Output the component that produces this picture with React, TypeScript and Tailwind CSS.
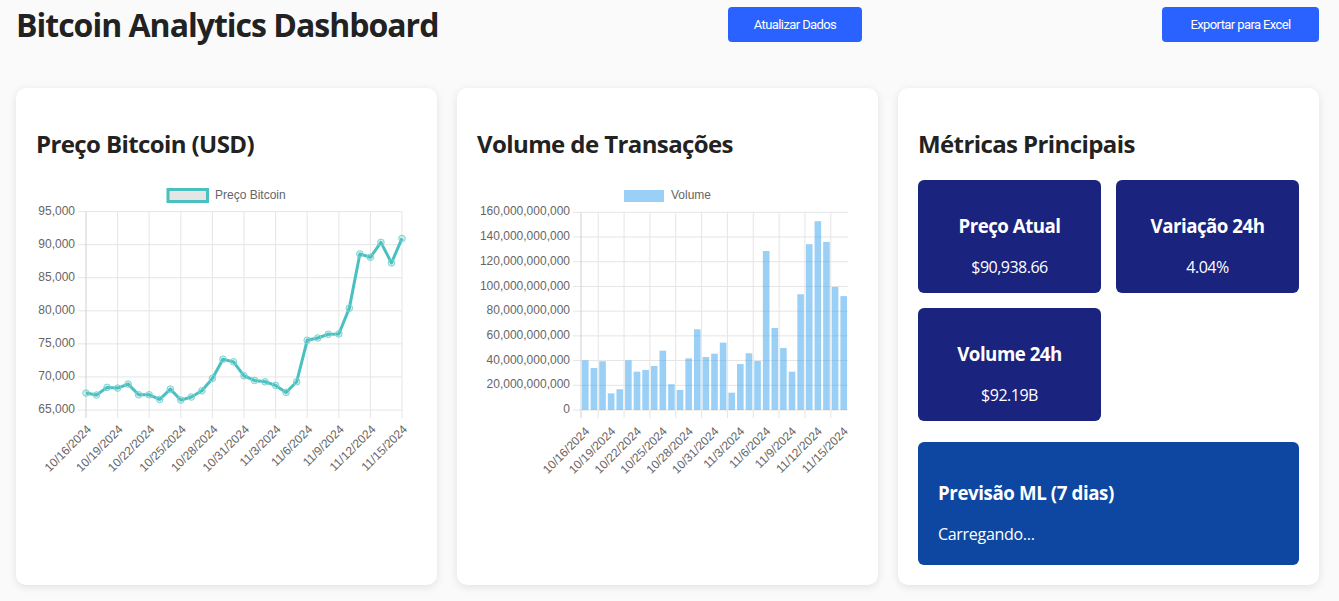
import React from "react"

const prices = [
  67560, 67260, 68420, 68310, 68920, 67300, 67300, 66600, 68160, 66500, 66960, 67900, 69770, 72680, 72280, 70170,
  69470, 69270, 68720, 67660, 69270, 75540, 75890, 76450, 76500, 80400, 88600, 88090, 90350, 87240, 90938.66,
]

const volumes = [
  40.2, 34, 39.4, 13.5, 16.8, 40.2, 31, 32.4, 35.6, 48, 20.8, 16.2, 41.8, 65.3, 42.9, 45.6, 54.5, 14, 37.2, 45.9,
  39.7, 128.7, 66.4, 50.2, 31, 93.7, 134.2, 152.8, 136, 99.6, 92.19,
]

const labels = [
  "10/16/2024", "10/19/2024", "10/22/2024", "10/25/2024", "10/28/2024", "10/31/2024",
  "11/3/2024", "11/6/2024", "11/9/2024", "11/12/2024", "11/15/2024",
]

const font = { fontFamily: "'Liberation Sans', Arial, sans-serif" }

function PriceChart() {
  const x0 = 50
  const x1 = 366
  const top = 31.6
  const bottom = 230
  const step = (x1 - x0) / 30
  const yOf = (v: number) => bottom - ((v - 65000) / 30000) * (bottom - top)
  const pts = prices.map((v, i) => [x0 + i * step, yOf(v)])
  return (
    <svg width="381" height="320" style={font}>
      <rect x="132" y="9.5" width="39.5" height="12" fill="rgba(0,0,0,0.1)" stroke="#4bc0c0" strokeWidth="3" />
      <text x="179" y="15.5" fontSize="12" fill="#666" dominantBaseline="middle">Preço Bitcoin</text>
      {[95000, 90000, 85000, 80000, 75000, 70000, 65000].map((v) => (
        <g key={v}>
          <line x1="42" x2={x1} y1={yOf(v)} y2={yOf(v)} stroke="#e5e5e5" />
          <text x="39" y={yOf(v)} fontSize="12" fill="#666" textAnchor="end" dominantBaseline="middle">
            {v.toLocaleString("en-US")}
          </text>
        </g>
      ))}
      {labels.map((l, k) => {
        const x = x0 + k * step * 3
        return (
          <g key={l}>
            <line x1={x} x2={x} y1={top} y2={bottom + 8} stroke={k === 0 ? "#d0d0d0" : "#e5e5e5"} />
            <text
              transform={`translate(${x + 3} ${bottom + 17}) rotate(-45)`}
              fontSize="12"
              fill="#666"
              textAnchor="end"
              dy="0.35em"
            >
              {l}
            </text>
          </g>
        )
      })}
      <polyline
        points={pts.map((p) => p.join(",")).join(" ")}
        fill="none"
        stroke="#4bc0c0"
        strokeWidth="3"
        strokeLinejoin="round"
      />
      {pts.map(([x, y], i) => (
        <circle key={i} cx={x} cy={y} r="3.3" fill="rgba(75,192,192,0.25)" stroke="#7fd3d3" strokeWidth="1" />
      ))}
    </svg>
  )
}

function VolumeChart() {
  const x0 = 104
  const x1 = 371
  const top = 32.3
  const bottom = 230
  const cat = (x1 - x0) / 31
  const yOf = (v: number) => bottom - (v / 160) * (bottom - top)
  const ticks = [160, 140, 120, 100, 80, 60, 40, 20, 0]
  return (
    <svg width="381" height="320" style={font}>
      <rect x="147" y="10" width="40" height="12" fill="rgba(54,162,235,0.5)" />
      <text x="194" y="16" fontSize="12" fill="#666" dominantBaseline="middle">Volume</text>
      {ticks.map((v) => (
        <g key={v}>
          <line x1="96" x2={x1} y1={yOf(v)} y2={yOf(v)} stroke="#e5e5e5" />
          <text x="93" y={yOf(v)} fontSize="12" fill="#666" textAnchor="end" dominantBaseline="middle">
            {v === 0 ? "0" : `${v},000,000,000`}
          </text>
        </g>
      ))}
      <line x1={x0} x2={x0} y1={top} y2={bottom + 8} stroke="#d0d0d0" />
      {Array.from({ length: 10 }).map((_, k) => {
        const x = x0 + (2 + 3 * k) * cat
        return <line key={k} x1={x} x2={x} y1={top} y2={bottom + 8} stroke="#e5e5e5" />
      })}
      {volumes.map((v, i) => {
        const w = 6.6
        const cx = x0 + (i + 0.5) * cat
        return (
          <rect key={i} x={cx - w / 2} y={yOf(v)} width={w} height={bottom - yOf(v)} fill="rgba(54,162,235,0.5)" />
        )
      })}
      {labels.map((l, k) => {
        const x = x0 + (k * 3 + 0.5) * cat
        return (
          <text
            key={l}
            transform={`translate(${x + 2} ${bottom + 19}) rotate(-45)`}
            fontSize="12"
            fill="#666"
            textAnchor="end"
            dy="0.35em"
          >
            {l}
          </text>
        )
      })}
    </svg>
  )
}

function Metric({ title, value }: { title: string; value: string }) {
  return (
    <div className="bg-[#1a237e] rounded-md p-[15px] text-center text-white">
      <h3 className="text-[18.7px] leading-[25px] font-bold tracking-[-0.5px] mt-[18px] mb-[19px]">{title}</h3>
      <p className="text-base leading-[21px] tracking-[-0.5px]">{value}</p>
    </div>
  )
}

export default function App() {
  return (
    <div
      className="min-h-screen bg-[#fafafa] pl-[16px] pr-[20px] text-[#222]"
      style={{ fontFamily: "'Open Sans', 'Noto Sans', sans-serif" }}
    >
      <header className="h-[49px] flex items-center">
        <h1 className="w-[420px] text-[32px] leading-[40px] font-bold tracking-[-1px] whitespace-nowrap">
          Bitcoin Analytics Dashboard
        </h1>
        <button
          className="ml-[292px] bg-[#2962ff] text-white rounded w-[134px] h-[35px] text-[13px] tracking-[-0.6px]"
          style={{ fontFamily: "Roboto, sans-serif" }}
        >
          Atualizar Dados
        </button>
        <button
          className="ml-auto bg-[#2962ff] text-white rounded w-[157px] h-[35px] text-[13px] tracking-[-0.6px]"
          style={{ fontFamily: "Roboto, sans-serif" }}
        >
          Exportar para Excel
        </button>
      </header>

      <div className="grid grid-cols-3 gap-[20px] mt-[39px]">
        <div className="bg-white rounded-[10px] shadow-[0_2px_8px_rgba(0,0,0,0.1)] p-[20px]">
          <h2 className="text-2xl leading-[32px] font-bold tracking-[-0.6px] mt-[20px] mb-[20px]">Preço Bitcoin (USD)</h2>
          <PriceChart />
        </div>
        <div className="bg-white rounded-[10px] shadow-[0_2px_8px_rgba(0,0,0,0.1)] p-[20px]">
          <h2 className="text-2xl leading-[32px] font-bold tracking-[-0.6px] mt-[20px] mb-[20px]">Volume de Transações</h2>
          <VolumeChart />
        </div>
        <div className="bg-white rounded-[10px] shadow-[0_2px_8px_rgba(0,0,0,0.1)] p-[20px]">
          <h2 className="text-2xl leading-[32px] font-bold tracking-[-0.6px] mt-[20px] mb-[20px]">Métricas Principais</h2>
          <div className="grid grid-cols-2 gap-[15px]">
            <Metric title="Preço Atual" value="$90,938.66" />
            <Metric title="Variação 24h" value="4.04%" />
            <Metric title="Volume 24h" value="$92.19B" />
          </div>
          <div className="bg-[#0d47a1] rounded-md p-[20px] mt-[21px] text-white">
            <h3 className="text-[18.7px] leading-[25px] font-bold tracking-[-0.4px] mt-[18px] mb-[19px]">
              Previsão ML (7 dias)
            </h3>
            <p className="text-base leading-[21px] tracking-[-0.3px]">Carregando...</p>
          </div>
        </div>
      </div>
    </div>
  )
}
